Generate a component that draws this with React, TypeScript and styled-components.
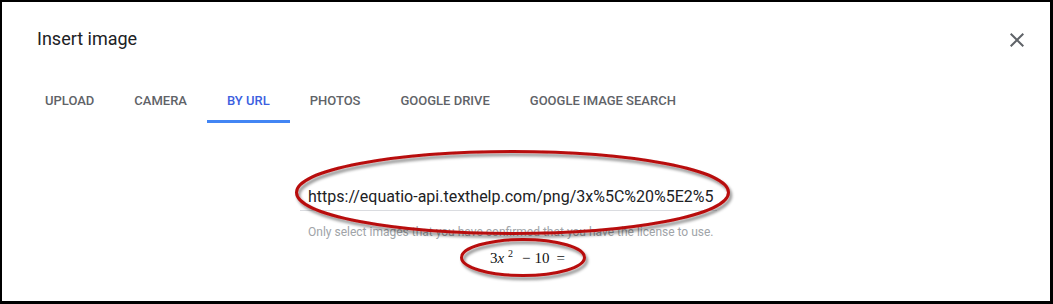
import React from "react";
import styled, { createGlobalStyle } from "styled-components";

const Global = createGlobalStyle`
  html, body { margin: 0; padding: 0; background: #fff; }
  body { font-family: Roboto, "Liberation Sans", Arial, sans-serif; }
`;

const Dialog = styled.div`
  position: relative;
  width: 1053px;
  height: 304px;
  box-sizing: border-box;
  border-style: solid;
  border-color: #000;
  border-width: 2px 3px 3px 2px;
  background: #fff;
  overflow: hidden;
`;

const Header = styled.div`
  display: flex;
  justify-content: space-between;
  align-items: flex-start;
  padding: 25px 21px 0 35px;
`;

const Title = styled.h1`
  margin: 0;
  font-family: Roboto, "Liberation Sans", sans-serif;
  font-size: 18px;
  line-height: 24px;
  font-weight: 400;
  color: #202124;
`;

const CloseButton = styled.button`
  display: flex;
  width: 24px;
  height: 24px;
  margin-top: 1px;
  padding: 0;
  border: 0;
  background: none;
  color: #5f6368;
  cursor: pointer;
`;

const TabRow = styled.div`
  display: flex;
  margin-top: 22px;
  padding-left: 23px;
`;

const Tab = styled.div<{ $active?: boolean }>`
  padding: 19px 20px 11px;
  font-family: Roboto, "Liberation Sans", sans-serif;
  font-size: 13px;
  line-height: 16px;
  font-weight: 500;
  text-transform: uppercase;
  color: ${(p) => (p.$active ? "#3d5fdf" : "#5f6368")};
  border-bottom: 3px solid ${(p) => (p.$active ? "#4285f4" : "transparent")};
  white-space: nowrap;
`;

const Content = styled.div`
  display: flex;
  flex-direction: column;
  padding-top: 64px;
`;

const Form = styled.div`
  margin-left: 298px;
  width: 417px;
`;

const UrlInput = styled.div`
  padding: 0 0 3px 8px;
  border-bottom: 1px solid #dadce0;
  font-family: Roboto, "Liberation Sans", sans-serif;
  font-size: 16px;
  line-height: 20px;
  color: #202124;
  white-space: nowrap;
`;

const Helper = styled.div`
  margin-top: 13px;
  padding-left: 8px;
  font-family: Roboto, "Liberation Sans", sans-serif;
  font-size: 12px;
  line-height: 16px;
  color: #a0a4a8;
  white-space: nowrap;
`;

const Equation = styled.div`
  margin-top: 9px;
  display: flex;
  justify-content: center;
  align-items: baseline;
  padding-left: 3px;
  font-family: "Liberation Serif", "Times New Roman", serif;
  font-size: 15px;
  line-height: 18px;
  color: #111;
`;

const Var = styled.span`
  font-style: italic;
`;

const Sup = styled.span`
  font-size: 10px;
  position: relative;
  top: -6px;
  margin-left: 4px;
`;

const Op = styled.span<{ $gap: number }>`
  margin-left: ${(p) => p.$gap}px;
`;

const Annotations = styled.svg`
  position: absolute;
  left: -2px;
  top: -2px;
  width: 1053px;
  height: 304px;
  pointer-events: none;
`;

const tabs = ["Upload", "Camera", "By URL", "Photos", "Google Drive", "Google Image Search"];

export default function App() {
  return (
    <>
      <Global />
      <Dialog>
        <Header>
          <Title>Insert image</Title>
          <CloseButton aria-label="Close">
            <svg width="24" height="24" viewBox="0 0 24 24" fill="currentColor">
              <path d="M19 6.41L17.59 5 12 10.59 6.41 5 5 6.41 10.59 12 5 17.59 6.41 19 12 13.41 17.59 19 19 17.59 13.41 12z" />
            </svg>
          </CloseButton>
        </Header>
        <TabRow>
          {tabs.map((t) => (
            <Tab key={t} $active={t === "By URL"}>
              {t}
            </Tab>
          ))}
        </TabRow>
        <Content>
          <Form>
            <UrlInput>https://equatio-api.texthelp.com/png/3x%5C%20%5E2%5</UrlInput>
            <Helper>Only select images that you have confirmed that you have the license to use.</Helper>
          </Form>
          <Equation>
            <span>3</span>
            <Var>x</Var>
            <Sup>2</Sup>
            <Op $gap={9}>−</Op>
            <Op $gap={4}>10</Op>
            <Op $gap={7}>=</Op>
          </Equation>
        </Content>
        <Annotations viewBox="0 0 1053 304">
          <defs>
            <filter id="sh" x="-10%" y="-30%" width="120%" height="160%">
              <feDropShadow dx="2" dy="3" stdDeviation="1.6" floodColor="#000" floodOpacity="0.45" />
            </filter>
          </defs>
          <ellipse cx="512.5" cy="192.5" rx="216" ry="41" fill="none" stroke="#b80c0c" strokeWidth="3" filter="url(#sh)" />
          <ellipse cx="523" cy="257.5" rx="61.5" ry="18" fill="none" stroke="#b80c0c" strokeWidth="3" filter="url(#sh)" />
        </Annotations>
      </Dialog>
    </>
  );
}
